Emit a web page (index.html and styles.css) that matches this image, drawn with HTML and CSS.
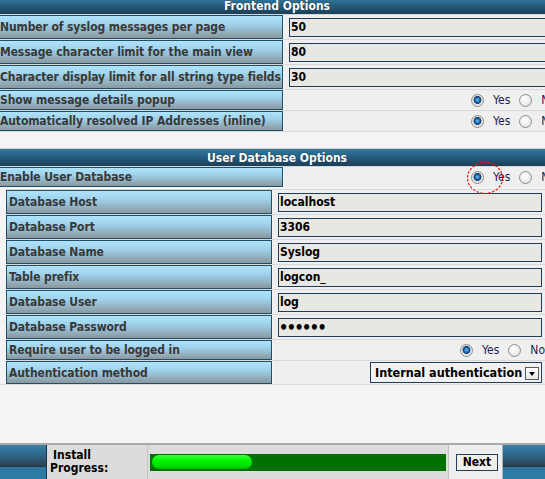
FILE: index.html
```html
<!DOCTYPE html>
<html lang="en">
<head>
<meta charset="utf-8">
<title>Install - Step</title>
<link rel="stylesheet" href="styles.css">
</head>
<body>
<main class="page">
  <section class="group">
    <h2 class="group-head">Frontend Options</h2>
    <div class="row tall">
      <div class="lbl">Number of syslog messages per page</div>
      <div class="val"><input class="txt" type="text" value="50"></div>
    </div>
    <div class="row tall">
      <div class="lbl">Message character limit for the main view</div>
      <div class="val"><input class="txt" type="text" value="80"></div>
    </div>
    <div class="row tall">
      <div class="lbl">Character display limit for all string type fields</div>
      <div class="val"><input class="txt" type="text" value="30"></div>
    </div>
    <div class="row short">
      <div class="lbl">Show message details popup</div>
      <div class="val radios">
        <label class="opt"><input class="rb" type="radio" name="popup" checked>Yes</label>
        <label class="opt"><input class="rb" type="radio" name="popup">No</label>
      </div>
    </div>
    <div class="row short">
      <div class="lbl">Automatically resolved IP Addresses (inline)</div>
      <div class="val radios">
        <label class="opt"><input class="rb" type="radio" name="resolve" checked>Yes</label>
        <label class="opt"><input class="rb" type="radio" name="resolve">No</label>
      </div>
    </div>
  </section>

  <section class="group db">
    <h2 class="group-head">User Database Options</h2>
    <div class="row short">
      <div class="lbl">Enable User Database</div>
      <div class="val radios">
        <label class="opt marked"><input class="rb" type="radio" name="userdb" checked>Yes
          <svg class="ring" width="40" height="36" viewBox="0 0 40 36" aria-hidden="true"><ellipse cx="20" cy="18" rx="17.5" ry="15.5" fill="none" stroke="#f01010" stroke-width="1.2" stroke-dasharray="2.5 1.5"/></svg>
        </label>
        <label class="opt"><input class="rb" type="radio" name="userdb">No</label>
      </div>
    </div>
    <div class="sub">
      <div class="row tall">
        <div class="lbl">Database Host</div>
        <div class="val"><input class="txt" type="text" value="localhost"></div>
      </div>
      <div class="row tall">
        <div class="lbl">Database Port</div>
        <div class="val"><input class="txt" type="text" value="3306"></div>
      </div>
      <div class="row tall">
        <div class="lbl">Database Name</div>
        <div class="val"><input class="txt" type="text" value="Syslog"></div>
      </div>
      <div class="row tall">
        <div class="lbl">Table prefix</div>
        <div class="val"><input class="txt" type="text" value="logcon_"></div>
      </div>
      <div class="row tall">
        <div class="lbl">Database User</div>
        <div class="val"><input class="txt" type="text" value="log"></div>
      </div>
      <div class="row tall">
        <div class="lbl">Database Password</div>
        <div class="val"><input class="txt pw" type="password" value="secret"></div>
      </div>
      <div class="row short">
        <div class="lbl">Require user to be logged in</div>
        <div class="val radios">
          <label class="opt"><input class="rb" type="radio" name="login" checked>Yes</label>
          <label class="opt"><input class="rb" type="radio" name="login">No</label>
        </div>
      </div>
      <div class="row auth">
        <div class="lbl">Authentication method</div>
        <div class="val">
          <div class="sel"><span class="sel-text">Internal authentication</span><span class="sel-btn"></span></div>
        </div>
      </div>
    </div>
  </section>
</main>

<footer class="bar">
  <div class="cap"></div>
  <div class="prog-label">Install<br>Progress:</div>
  <div class="prog-cell"><div class="track"><div class="fill"></div></div></div>
  <div class="next-cell"><button class="btn" type="button">Next</button></div>
  <div class="cap cap-r"></div>
</footer>
</body>
</html>
```

FILE: styles.css
```css
* { box-sizing: border-box; }

html, body {
  margin: 0;
  height: 100%;
}

body {
  background: #f4f4f4;
  font-family: "DejaVu Sans Condensed", "DejaVu Sans", sans-serif;
  font-stretch: condensed;
  font-size: 12px;
  color: #000;
  overflow: hidden;
  display: flex;
  flex-direction: column;
}

.page {
  width: 560px;
  margin: -2px 0 0 -3px;
  flex: none;
}

.group {
  border-bottom: 1px solid #d8d8d8;
}

.group.db {
  margin-top: 16px;
  border-top: 1px solid #cfcfcf;
}

.group-head {
  margin: 0;
  height: 16px;
  padding-top: 1px;
  line-height: 15px;
  text-align: center;
  font-size: 12px;
  font-weight: bold;
  color: #fff;
  text-shadow: 0 0 1px #0c2230;
  background: linear-gradient(#327ca3, #24587a 55%, #1c3f56);
}

.db .group-head {
  height: 17px;
  line-height: 16px;
}

.row {
  display: grid;
  grid-template-columns: 286px 1fr;
  column-gap: 1px;
  border-top: 1px solid #d8d8d8;
}

.lbl {
  height: 24px;
  border: 1px solid #1d5169;
  background: linear-gradient(#afe3fb, #a0d4ee 35%, #94b4c4 70%, #8b979e);
  color: #383838;
  font-weight: bold;
  letter-spacing: -0.1px;
  padding-left: 2px;
  display: flex;
  align-items: center;
  white-space: nowrap;
  overflow: hidden;
}

.row.short .lbl { height: 20px; }
.row.auth .lbl { height: 23px; }

.val {
  background: #efefef;
  display: flex;
  align-items: center;
  padding: 0 4px 0 5px;
}

.txt {
  width: 100%;
  height: 19px;
  margin: 0;
  border: 1px solid #1f3d5c;
  background: #e8e7e2;
  font-family: inherit;
  font-stretch: condensed;
  font-size: 12px;
  font-weight: bold;
  color: #000;
  padding: 0 1px;
}

.txt.pw {
  font-size: 16px;
  letter-spacing: -1.5px;
  padding-left: 0;
}

.radios {
  justify-content: flex-end;
  padding-right: 1px;
  gap: 9px;
}

.opt {
  display: flex;
  align-items: center;
  gap: 9px;
  color: #1e1e50;
  font-weight: normal;
}

.marked { position: relative; }

.ring {
  position: absolute;
  left: -6px;
  top: -10px;
  pointer-events: none;
}

.rb {
  appearance: none;
  -webkit-appearance: none;
  width: 13px;
  height: 13px;
  margin: 0;
  border-radius: 50%;
  border: 1px solid #8d8d8d;
  background: radial-gradient(circle at 40% 35%, #ffffff, #f2f2f2 45%, #d4d4d4);
}

.rb:checked {
  background: radial-gradient(circle at 50% 45%, #8ccaf4 0, #2c82c8 1.6px, #1a5e9e 2.8px, #123c66 3.6px, #e2e2e2 4.3px, #f6f6f6 100%);
}

.sub {
  padding: 2px 11px 0 9px;
}

.sub .row {
  grid-template-columns: 266px 1fr;
}

.sel {
  margin-left: auto;
  margin-top: -1px;
  width: 172px;
  height: 21px;
  border: 1px solid #1f3d5c;
  background: #f1f1f1;
  display: flex;
  align-items: flex-end;
  justify-content: space-between;
  padding: 0 2px 1px 4px;
  font-size: 12.5px;
  font-weight: bold;
  line-height: 16px;
  white-space: nowrap;
  color: #000;
}

.sel-btn {
  width: 14px;
  height: 13px;
  flex: none;
  margin-bottom: 1px;
  border: 1px solid #5a5a5a;
  background: linear-gradient(#ffffff, #e4e4e4);
  position: relative;
}

.sel-btn::after {
  content: "";
  position: absolute;
  left: 2.5px;
  top: 4px;
  border-left: 3.5px solid transparent;
  border-right: 3.5px solid transparent;
  border-top: 4px solid #000;
}

.bar {
  margin-top: auto;
  height: 36px;
  flex: none;
  border-top: 2px solid #a9a9a9;
  background: #dcdcdc;
  display: flex;
}

.cap {
  width: 47px;
  flex: none;
  border-right: 1px solid #1b3344;
  background: linear-gradient(#3a82aa, #2f6b8e 25%, #2c4a5e 55%, #293845 64%, #2b77a0 65%, #2e7da6);
}

.cap-r {
  flex: 1;
  width: auto;
  border-right: 0;
  border-left: 1px solid #9fb8c8;
}

.prog-label {
  width: 101px;
  flex: none;
  border-right: 1px solid #c4c4c4;
  padding: 4px 0 0 3px;
  text-indent: 3px;
  font-weight: bold;
  line-height: 13px;
  color: #000;
}

.prog-cell {
  width: 301px;
  flex: none;
  border-right: 1px solid #c4c4c4;
  padding: 9px 2px 0 2px;
}

.track {
  height: 17px;
  background: #007000;
  padding: 1px 2px;
}

.fill {
  width: 100px;
  height: 14px;
  border-radius: 7px;
  background: linear-gradient(#3cff3c, #00f400 40%, #00d800 85%, #00b000);
}

.next-cell {
  width: 53px;
  flex: none;
  background: #eeeeee;
  padding: 9px 0 0 7px;
}

.btn {
  display: block;
  width: 42px;
  height: 17px;
  margin: 0;
  padding: 0;
  border: 1px solid #1f3d5c;
  background: #f1eee8;
  font-family: inherit;
  font-stretch: condensed;
  font-size: 12px;
  font-weight: bold;
  line-height: 15px;
  color: #000;
}
```
